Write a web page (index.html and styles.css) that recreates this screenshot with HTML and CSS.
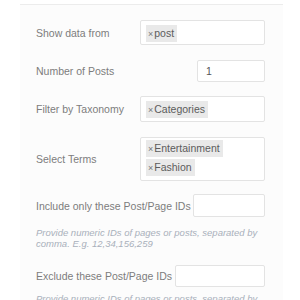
FILE: index.html
```html
<!DOCTYPE html>
<html lang="en">
<head>
    <meta charset="UTF-8">
    <title>Query Settings</title>
    <link rel="stylesheet" href="styles.css">
</head>
<body>
    <div class="panel">
        <div class="row row-source">
            <label>Show data from</label>
            <div class="field wide"><span class="tag"><i>×</i>post</span></div>
        </div>
        <div class="row row-count">
            <label>Number of Posts</label>
            <div class="field small">1</div>
        </div>
        <div class="row row-tax">
            <label>Filter by Taxonomy</label>
            <div class="field wide"><span class="tag"><i>×</i>Categories</span></div>
        </div>
        <div class="row row-terms">
            <label>Select Terms</label>
            <div class="field wide tags">
                <span class="tag"><i>×</i>Entertainment</span>
                <span class="tag"><i>×</i>Fashion</span>
            </div>
        </div>
        <div class="row row-include">
            <label>Include only these Post/Page IDs</label>
            <div class="field include"></div>
        </div>
        <p class="help">Provide numeric IDs of pages or posts, separated by comma. E.g. 12,34,156,259</p>
        <div class="row row-exclude">
            <label>Exclude these Post/Page IDs</label>
            <div class="field exclude"></div>
        </div>
        <p class="help">Provide numeric IDs of pages or posts, separated by comma. E.g. 12,34,156,259</p>
    </div>
</body>
</html>
```

FILE: styles.css
```css
* {
    margin: 0;
    padding: 0;
    box-sizing: border-box;
}
body {
    font-family: "Liberation Sans", Arial, sans-serif;
    background: #fff;
    color: #7a7a7a;
    overflow: hidden;
}
.panel {
    margin: 4px 17px 0 20px;
    padding: 15px 18px 0 16px;
    border-top: 1px solid #ececec;
    background: #fcfcfc;
    height: 400px;
}
.row {
    display: flex;
    align-items: center;
    justify-content: space-between;
}
.row label {
    font-size: 10.5px;
    color: #7d7d7d;
}
.field {
    background: #fff;
    border: 1px solid #e3e3e3;
    border-radius: 2px;
    font-size: 10.5px;
    color: #555;
}
.wide {
    width: 125px;
    height: 25px;
    padding: 4px 5px;
}
.small {
    width: 68px;
    height: 22px;
    padding: 4px 8px;
}
.tags {
    height: 44px;
    padding: 2px 5px;
    display: flex;
    flex-direction: column;
    align-items: flex-start;
    gap: 2px;
}
.tag {
    display: inline-block;
    background: #e9e9e9;
    color: #5c5c5c;
    padding: 1px 3px 1px 2px;
    line-height: 14px;
}
.tag i {
    font-style: normal;
    font-size: 9px;
    margin-right: 1px;
    color: #777;
}
.row-count { margin-top: 15px; }
.row-tax { margin-top: 14px; }
.row-tax .wide { height: 26px; }
.row-terms { margin-top: 15px; }
.row-include { margin-top: 13px; }
.include {
    width: 72px;
    height: 23px;
}
.exclude {
    width: 90px;
    height: 22px;
}
.help {
    font-size: 9.5px;
    font-style: italic;
    color: #a9b0bb;
    line-height: 11px;
    margin: 10px 0 16px;
}
.row-exclude + .help { margin-top: 6px; }
```
